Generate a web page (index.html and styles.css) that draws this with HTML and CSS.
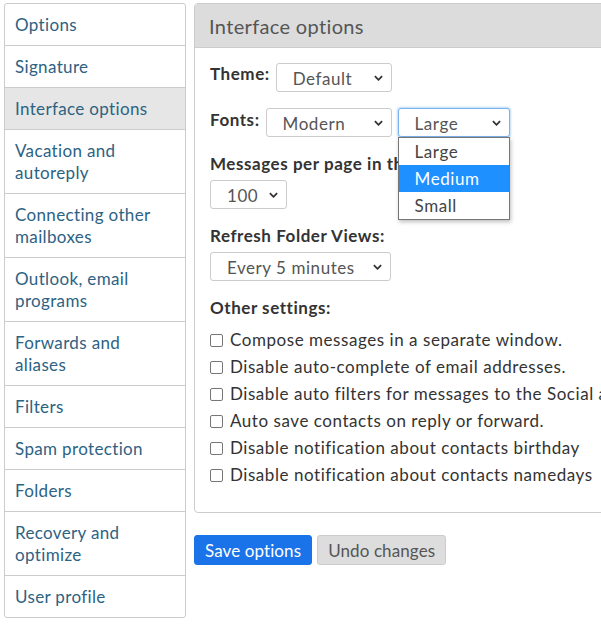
FILE: index.html
```html
<!DOCTYPE html>
<html lang="en">
<head>
<meta charset="utf-8">
<title>Interface options</title>
<link rel="stylesheet" href="styles.css">
</head>
<body>
<div class="page">
  <nav class="sidebar">
    <a class="nav-item">Options</a>
    <a class="nav-item">Signature</a>
    <a class="nav-item active">Interface options</a>
    <a class="nav-item">Vacation and<br>autoreply</a>
    <a class="nav-item">Connecting other<br>mailboxes</a>
    <a class="nav-item">Outlook, email<br>programs</a>
    <a class="nav-item">Forwards and<br>aliases</a>
    <a class="nav-item">Filters</a>
    <a class="nav-item">Spam protection</a>
    <a class="nav-item">Folders</a>
    <a class="nav-item">Recovery and<br>optimize</a>
    <a class="nav-item">User profile</a>
  </nav>
  <main class="main">
    <section class="panel">
      <header class="panel-head">Interface options</header>
      <div class="panel-body">
        <div class="row inline">
          <span class="label">Theme:</span>
          <span class="select w-theme"><span>Default</span><svg class="chev" viewBox="0 0 10 6"><path d="M1 1l4 4 4-4"/></svg></span>
        </div>
        <div class="row inline">
          <span class="label">Fonts:</span>
          <span class="select w-modern"><span>Modern</span><svg class="chev" viewBox="0 0 10 6"><path d="M1 1l4 4 4-4"/></svg></span>
          <span class="dd-wrap">
            <span class="select w-size focus"><span>Large</span><svg class="chev" viewBox="0 0 10 6"><path d="M1 1l4 4 4-4"/></svg></span>
            <ul class="dropdown">
              <li>Large</li>
              <li class="hl">Medium</li>
              <li>Small</li>
            </ul>
          </span>
        </div>
        <div class="row">
          <div class="label">Messages per page in the list view:</div>
          <span class="select w-num"><span>100</span><svg class="chev" viewBox="0 0 10 6"><path d="M1 1l4 4 4-4"/></svg></span>
        </div>
        <div class="row">
          <div class="label">Refresh Folder Views:</div>
          <span class="select w-refresh"><span>Every 5 minutes</span><svg class="chev" viewBox="0 0 10 6"><path d="M1 1l4 4 4-4"/></svg></span>
        </div>
        <div class="row">
          <div class="label">Other settings:</div>
          <ul class="checks">
            <li><span class="cb"></span>Compose messages in a separate window.</li>
            <li><span class="cb"></span>Disable auto-complete of email addresses.</li>
            <li><span class="cb"></span>Disable auto filters for messages to the Social and Promotions folders.</li>
            <li><span class="cb"></span>Auto save contacts on reply or forward.</li>
            <li><span class="cb"></span>Disable notification about contacts birthday</li>
            <li><span class="cb"></span>Disable notification about contacts namedays</li>
          </ul>
        </div>
      </div>
    </section>
    <div class="actions">
      <button class="btn primary">Save options</button>
      <button class="btn">Undo changes</button>
    </div>
  </main>
</div>
</body>
</html>
```

FILE: styles.css
```css
* { box-sizing: border-box; }
html, body { margin: 0; padding: 0; overflow: hidden; }
body {
  font-family: Lato, "Open Sans", sans-serif;
  font-size: 17px;
  letter-spacing: 0.55px;
  color: #333;
  background: #fff;
}
.page {
  display: flex;
  align-items: flex-start;
  gap: 8px;
  padding: 3px 0 0 4px;
  width: 760px;
}
.sidebar {
  width: 182px;
  flex: none;
  border: 1px solid #ccc;
  border-radius: 3px;
  display: flex;
  flex-direction: column;
  overflow: hidden;
  letter-spacing: 0.35px;
}
.nav-item {
  display: block;
  padding: 10px 10px 9px;
  line-height: 22px;
  color: #2d6283;
  border-top: 1px solid #ccc;
}
.nav-item:first-child { border-top: none; padding-top: 10px; }
.nav-item.active { background: #e6e6e6; }
.main {
  flex: 1;
  display: flex;
  flex-direction: column;
  gap: 22px;
}
.panel {
  border: 1px solid #ccc;
  border-radius: 4px;
  width: 520px;
}
.panel-head {
  background: #dcdcdc;
  border-bottom: 1px solid #ccc;
  height: 44px;
  padding: 0 14px;
  display: flex;
  align-items: center;
  font-size: 20px;
  letter-spacing: 0.35px;
  color: #555;
}
.panel-body {
  padding: 14px 15px 26px;
  display: flex;
  flex-direction: column;
  gap: 16px;
}
.row.inline {
  display: flex;
  align-items: flex-start;
  gap: 6px;
}
.label {
  font-weight: bold;
  color: #333;
  line-height: 22px;
}
.row.inline .label { padding-top: 1px; }
.select {
  display: inline-flex;
  align-items: center;
  justify-content: space-between;
  height: 29px;
  border: 1px solid #ccc;
  border-radius: 3px;
  padding: 2px 8px 0 16px;
  color: #555;
  background: #fff;
  line-height: 1;
}
.chev { width: 9px; height: 6px; fill: none; stroke: #333; stroke-width: 2; margin-bottom: 2px; }
.w-theme { width: 116px; margin-top: 1px; }
.w-modern { width: 126px; }
.w-size { width: 112px; }
.w-num { width: 77px; margin-top: 5px; }
.w-refresh { width: 181px; margin-top: 5px; }
.focus { border-color: #7cb3ec; box-shadow: 0 0 2px 1px rgba(100, 170, 240, .45); }
.dd-wrap { position: relative; display: inline-block; }
.dropdown {
  position: absolute;
  left: 0;
  top: 29px;
  width: 112px;
  margin: 0;
  padding: 0;
  list-style: none;
  background: #fff;
  border: 1px solid #767676;
  box-shadow: 1px 2px 4px rgba(0, 0, 0, .25);
  z-index: 5;
}
.dropdown li {
  height: 27px;
  line-height: 27px;
  padding-left: 16px;
  color: #444;
}
.dropdown li.hl { background: #1e90ff; color: #fff; }
.checks {
  list-style: none;
  margin: 10px 0 0;
  padding: 0;
  display: flex;
  flex-direction: column;
  gap: 5px;
}
.checks li {
  display: flex;
  align-items: center;
  gap: 7px;
  white-space: nowrap;
  line-height: 22px;
  color: #333;
}
.cb {
  width: 13px;
  height: 13px;
  border: 1px solid #767676;
  border-radius: 2px;
  flex: none;
}
.actions { display: flex; gap: 5px; }
.btn {
  font: inherit;
  letter-spacing: 0.1px;
  height: 30px;
  padding: 0 10px;
  border-radius: 3px;
  border: 1px solid #ccc;
  background: #ddd;
  color: #555;
}
.btn.primary { background: #1a73e8; border-color: #1a73e8; color: #fff; }
```
